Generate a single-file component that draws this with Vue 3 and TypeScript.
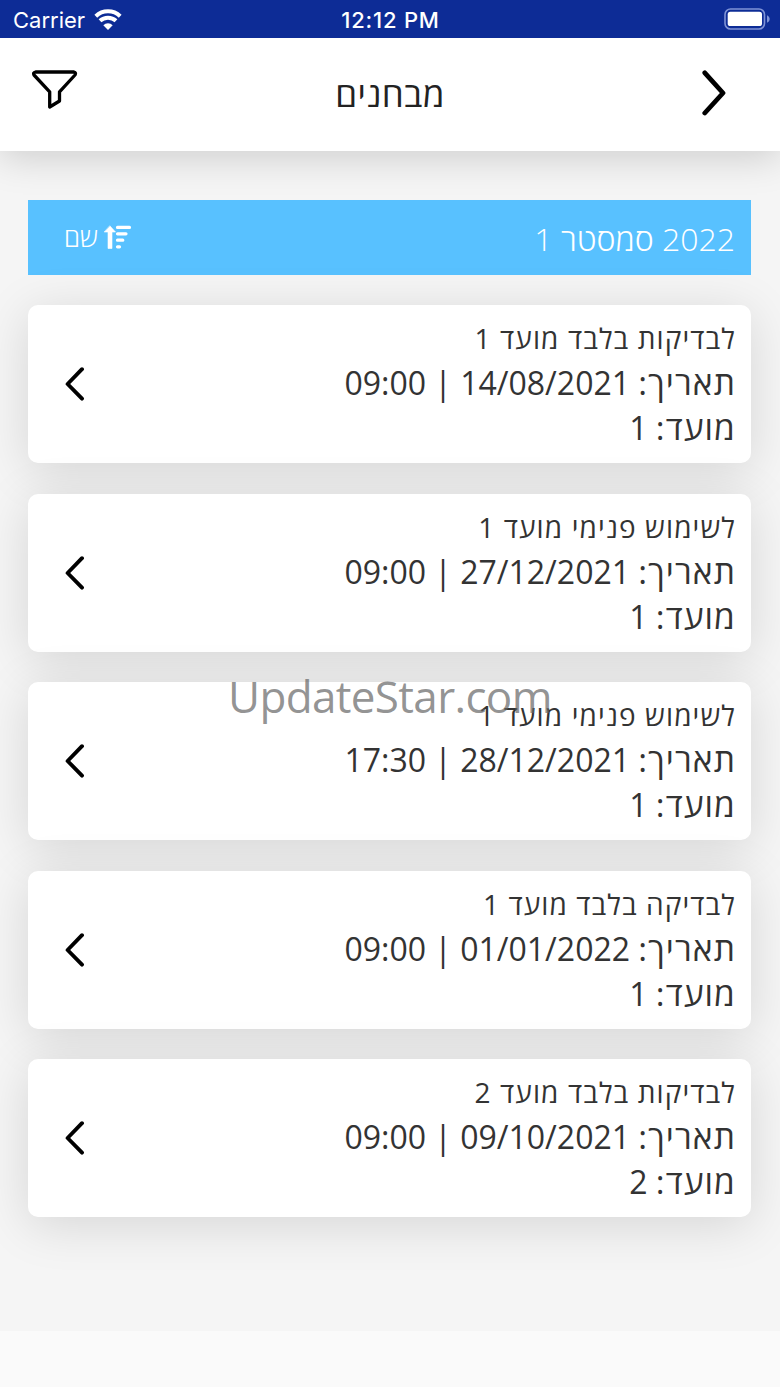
<script setup lang="ts">
interface Exam {
  id: number
  title: string
  date: string
  time: string
  term: string
}

const exams: Exam[] = [
  { id: 1, title: 'לבדיקות בלבד מועד 1', date: '14/08/2021', time: '09:00', term: '1' },
  { id: 2, title: 'לשימוש פנימי מועד 1', date: '27/12/2021', time: '09:00', term: '1' },
  { id: 3, title: 'לשימוש פנימי מועד 1', date: '28/12/2021', time: '17:30', term: '1' },
  { id: 4, title: 'לבדיקה בלבד מועד 1', date: '01/01/2022', time: '09:00', term: '1' },
  { id: 5, title: 'לבדיקות בלבד מועד 2', date: '09/10/2021', time: '09:00', term: '2' },
]
</script>

<template>
  <div class="screen">
    <div class="status">
      <div class="carrier">
        <span>Carrier</span>
        <svg class="wifi" width="30" height="22" viewBox="0 0 30 22">
          <path d="M2.8 7.2a17.6 17.6 0 0 1 24.4 0" />
          <path d="M7 11.8a11.7 11.7 0 0 1 16 0" />
          <path class="dot" d="M10.3 16.2a6.8 6.8 0 0 1 9.4 0L15 21z" />
        </svg>
      </div>
      <span class="clock">12:12 PM</span>
      <svg class="battery" width="46" height="22" viewBox="0 0 46 22">
        <rect class="shell" x="1" y="1" width="39.5" height="20" rx="5.5" />
        <rect class="charge" x="3.7" y="3.8" width="34.3" height="14.2" rx="2.6" />
        <path class="tip" d="M43 7.2c3.6 1.6 3.6 6 0 7.6z" />
      </svg>
    </div>

    <header class="header">
      <svg class="filter" width="46" height="40" viewBox="0 0 46 40">
        <path d="M3.500 2H42Q44.300 2.500 43 5L27.500 21.800V31L17.700 37V21.800L2 5Q.8 2.500 3.500 2z" />
      </svg>
      <h1>מבחנים</h1>
      <svg class="forward" width="24" height="46" viewBox="0 0 24 46">
        <path d="M2.800 2.800L21 23L2.800 43" />
      </svg>
    </header>

    <main class="content">
      <div class="semester">
        <div class="sort">
          <span>שם</span>
          <svg width="28" height="25" viewBox="0 0 28 25">
            <path class="solid" d="M6 1L11.500 7H8V23.500H4V7H.5z" />
            <path d="M13.500 2.400H25.500M13.500 8.800H22M13.500 15.200H18.800M13.500 21.800H15.500" />
          </svg>
        </div>
        <span class="semester-name" dir="rtl">2022 סמסטר 1</span>
      </div>

      <div class="list">
        <article v-for="exam in exams" :key="exam.id" class="card">
          <svg class="open" width="20" height="34" viewBox="0 0 20 34">
            <path d="M17 2.200L2.600 17L17 31.600" />
          </svg>
          <div class="details" dir="rtl">
            <div class="title">{{ exam.title }}</div>
            <div class="row"><b>תאריך:</b> <span class="value">{{ exam.date }} | {{ exam.time }}</span></div>
            <div class="row"><b>מועד:</b> <span class="value">{{ exam.term }}</span></div>
          </div>
        </article>
      </div>
    </main>
    <div class="footer"></div>
    <div class="watermark">UpdateStar.com</div>
  </div>
</template>

<style>
body {
  margin: 0;
  background: #fafafa;
}
</style>

<style scoped>
.screen {
  position: relative;
  display: flex;
  flex-direction: column;
  width: 780px;
  height: 1387px;
  overflow: hidden;
  background: #f5f5f5;
  font-family: "Open Sans", "Noto Sans", sans-serif;
  white-space: nowrap;
}

.status {
  display: grid;
  grid-template-columns: 1fr auto 1fr;
  align-items: center;
  box-sizing: border-box;
  height: 38px;
  padding: 0 10px 0 13px;
  background: #0d2c96;
  color: #fff;
  font-family: Inter, "Liberation Sans", sans-serif;
  font-size: 22px;
  line-height: 38px;
  z-index: 2;
}

.carrier {
  display: flex;
  align-items: center;
  gap: 8px;
  padding-top: 1px;
}

.wifi {
  margin-top: -1px;
  fill: none;
  stroke: #fff;
  stroke-width: 4;
}

.wifi .dot {
  fill: #fff;
  stroke: none;
}

.clock {
  margin-right: 2px;
  padding-top: 1px;
  font-weight: 500;
  letter-spacing: 0.8px;
}

.battery {
  justify-self: end;
  margin-top: -1px;
}

.shell {
  fill: none;
  stroke: #7f93d6;
  stroke-width: 1.6;
}

.charge {
  fill: #fff;
}

.tip {
  fill: #7f93d6;
}

.header {
  display: grid;
  grid-template-columns: 1fr auto 1fr;
  align-items: center;
  box-sizing: border-box;
  height: 113px;
  padding: 0 54px 0 32px;
  background: #fff;
  box-shadow: 0 6px 36px rgba(0, 0, 0, 0.17);
  z-index: 1;
}

.filter {
  margin-bottom: 9px;
  fill: none;
  stroke: #000;
  stroke-width: 3.3;
  stroke-linejoin: round;
}

h1 {
  margin: 0 -22px 2px 0;
  color: #222;
  font-size: 35px;
  font-weight: 400;
  line-height: 46px;
  letter-spacing: 0.4px;
}

.forward {
  justify-self: end;
  margin-bottom: 3px;
  fill: none;
  stroke: #000;
  stroke-width: 4.8;
  stroke-linecap: round;
  stroke-linejoin: round;
}

.content {
  flex: 1;
  padding: 49px 29px 0 28px;
}

.semester {
  display: flex;
  align-items: center;
  justify-content: space-between;
  box-sizing: border-box;
  height: 75px;
  padding: 0 16px 0 36px;
  background: #58c1ff;
  color: #fff;
  font-weight: 300;
}

.sort {
  display: flex;
  align-items: center;
  gap: 6px;
  font-size: 26px;
}

.sort span {
  margin-top: -2px;
}

.sort svg {
  fill: none;
  stroke: #fff;
  stroke-width: 3.2;
  stroke-linecap: round;
}

.sort .solid {
  fill: #fff;
  stroke: #fff;
  stroke-width: 0.6;
  stroke-linejoin: round;
}

.semester-name {
  padding-top: 1px;
  font-size: 32px;
  font-weight: 340;
}

.list {
  display: flex;
  flex-direction: column;
  gap: 30.450px;
  padding-top: 30.200px;
}

.card {
  display: flex;
  align-items: center;
  justify-content: space-between;
  box-sizing: border-box;
  height: 158px;
  padding: 0 15px 0 37px;
  border-radius: 10px;
  background: #fff;
  box-shadow: 0 8px 50px rgba(0, 0, 0, 0.13);
}

.open {
  fill: none;
  stroke: #000;
  stroke-width: 3.900;
  stroke-linecap: round;
  stroke-linejoin: round;
}

.details {
  align-self: flex-start;
  padding-top: 12px;
  color: #333;
  font-size: 32px;
}

.title {
  height: 43px;
  font-size: 28px;
  font-weight: 430;
  line-height: 43px;
  letter-spacing: 1.1px;
}

.row {
  height: 45px;
  line-height: 44px;
}

.row b {
  font-size: 33.5px;
  font-weight: 500;
  letter-spacing: 1.1px;
}

.footer {
  height: 56px;
  background: #fafafa;
}

.watermark {
  position: absolute;
  top: 666px;
  left: 228px;
  z-index: 3;
  color: rgba(100, 100, 100, 0.7);
  font-size: 44px;
  line-height: 60px;
  letter-spacing: -0.65px;
}
</style>
